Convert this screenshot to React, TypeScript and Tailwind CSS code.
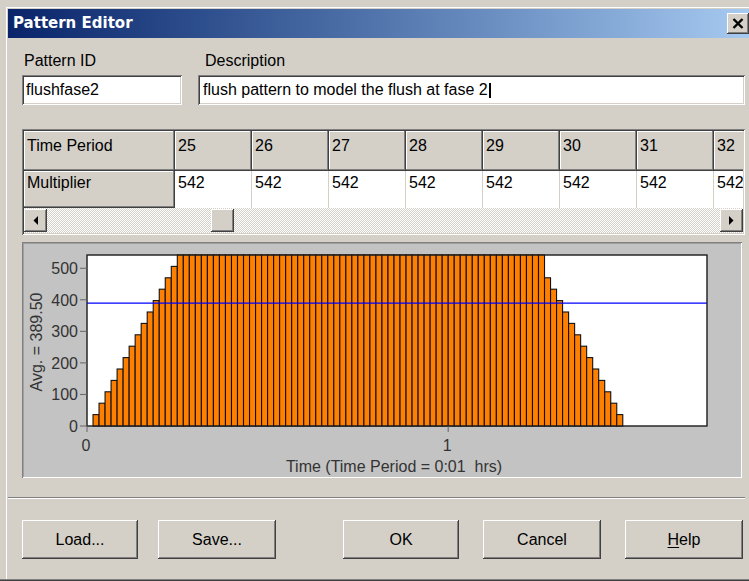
const raised =
  "shadow-[inset_-1px_-1px_#404040,inset_1px_1px_#ffffff,inset_-2px_-2px_#808080,inset_2px_2px_#d4d0c8]";
const sunken =
  "shadow-[inset_1px_1px_#808080,inset_-1px_-1px_#ffffff,inset_2px_2px_#404040,inset_-2px_-2px_#d4d0c8]";
const headerCell =
  "shadow-[inset_-1px_-1px_#404040,inset_-2px_-2px_#808080,inset_1px_1px_#ffffff]";

const periods = [25, 26, 27, 28, 29, 30, 31, 32];

// ramp up over 15 periods, hold at 542, ramp back down
const MAX = 542;
const values = Array.from({ length: 89 }, (_, i) =>
  i <= 15 ? (i * MAX) / 15 : i <= 75 ? MAX : ((89 - i) * MAX) / 15,
);
const AVG = 389.5;

const plot = { x: 63, y: 11, w: 620, h: 171 };
const barW = 6.02;
const yOf = (v: number) => plot.y + plot.h - (v * plot.h) / MAX;

function PatternChart() {
  return (
    <svg width={716} height={232} className="block">
      <rect x={plot.x} y={plot.y} width={plot.w} height={plot.h} fill="#ffffff" stroke="#333" strokeWidth={1} />
      {values.map((v, i) =>
        v > 0 ? (
          <rect
            key={i}
            x={plot.x + i * barW}
            y={yOf(v)}
            width={barW}
            height={plot.y + plot.h - yOf(v)}
            fill="#ff8000"
            stroke="#111"
            strokeWidth={1.1}
          />
        ) : null,
      )}
      <line x1={plot.x} x2={plot.x + plot.w} y1={yOf(AVG)} y2={yOf(AVG)} stroke="#0000ff" strokeWidth={1.4} />
      <rect x={plot.x} y={plot.y} width={plot.w} height={plot.h} fill="none" stroke="#222" strokeWidth={1} />

      <g fontFamily="'Liberation Sans', Arial, sans-serif" fontSize={16} fill="#333">
        {[0, 100, 200, 300, 400, 500].map((t) => (
          <g key={t}>
            <line x1={56} x2={plot.x} y1={yOf(t)} y2={yOf(t)} stroke="#666" />
            <text x={54} y={yOf(t) + 6} textAnchor="end">
              {t}
            </text>
          </g>
        ))}
        {[0, 1].map((h) => (
          <g key={h}>
            <line x1={plot.x + h * 60 * barW} x2={plot.x + h * 60 * barW} y1={182} y2={188} stroke="#666" />
            <text x={plot.x + h * 60 * barW - 1} y={207} textAnchor="middle">
              {h}
            </text>
          </g>
        ))}
        <text x={370} y={228} textAnchor="middle" style={{ whiteSpace: "pre" }}>
          {"Time (Time Period = 0:01  hrs)"}
        </text>
        <text transform="translate(18,98) rotate(-90)" textAnchor="middle">
          Avg. = 389.50
        </text>
      </g>
    </svg>
  );
}

function Arrow({ dir }: { dir: "left" | "right" }) {
  return (
    <div className={`flex h-[23px] w-[23px] shrink-0 items-center justify-center bg-[#d4d0c8] ${raised}`}>
      <svg width={5} height={9}>
        <polygon points={dir === "left" ? "5,0 5,9 0.5,4.5" : "0,0 0,9 4.5,4.5"} fill="#000" />
      </svg>
    </div>
  );
}

function Button({ label, width, className = "" }: { label: React.ReactNode; width: string; className?: string }) {
  return (
    <div
      className={`flex h-[39px] items-center justify-center bg-[#d4d0c8] text-[16px] text-black ${raised} ${width} ${className}`}
    >
      {label}
    </div>
  );
}

export default function App() {
  return (
    <div className="flex h-[581px] w-[749px] flex-col overflow-hidden bg-[#d4d0c8] font-['Liberation_Sans',Arial,sans-serif] text-black">
      <div className="ml-[6px] mt-[7px] flex flex-1 flex-col border-l border-t border-white pl-px pt-px">
        {/* title bar */}
        <div className="flex h-[29px] items-center justify-between bg-gradient-to-r from-[#0a246a] to-[#a6caf0] pl-[5px]">
          <span className="font-['DejaVu_Sans',sans-serif] text-[15px] font-bold text-white">Pattern Editor</span>
          <div className={`flex h-[21px] w-[22px] items-center justify-center bg-[#d4d0c8] ${raised}`}>
            <svg width={12} height={11}>
              <path d="M1.5 1 L10.5 10 M10.5 1 L1.5 10" stroke="#000" strokeWidth={2.4} />
            </svg>
          </div>
        </div>

        <div className="flex flex-col pl-[14px] pr-[4px]">
          {/* id + description */}
          <div className="mt-[13px] flex gap-[16px] text-[16px]">
            <div className="flex w-[160px] flex-col">
              <span className="h-[20px] pl-[2px] leading-[20px]">Pattern ID</span>
              <div className={`mt-[4px] flex h-[30px] items-center bg-white pl-[4px] ${sunken}`}>flushfase2</div>
            </div>
            <div className="flex w-[547px] flex-col">
              <span className="h-[20px] pl-[7px] leading-[20px]">Description</span>
              <div className={`mt-[4px] flex h-[30px] items-center bg-white pl-[5px] ${sunken}`}>
                flush pattern to model the flush at fase 2
                <span className="ml-px h-[15px] w-[2px] bg-black" />
              </div>
            </div>
          </div>

          {/* period grid */}
          <div className={`mt-[24px] flex h-[106px] w-[723px] flex-col bg-[#d4d0c8] p-[2px] ${sunken}`}>
            <div className="flex h-[40px] overflow-hidden text-[16px] leading-[18px]">
              <div className={`w-[151px] shrink-0 pl-[3px] pt-[6px] ${headerCell}`}>Time Period</div>
              {periods.map((p) => (
                <div key={p} className={`w-[77px] shrink-0 pl-[3px] pt-[6px] ${headerCell}`}>
                  {p}
                </div>
              ))}
            </div>
            <div className="flex h-[37px] overflow-hidden text-[16px] leading-[18px]">
              <div className={`w-[151px] shrink-0 pl-[3px] pt-[3px] ${headerCell}`}>Multiplier</div>
              {periods.map((p) => (
                <div key={p} className="w-[77px] shrink-0 border-r border-[#d4d0c8] bg-white pl-[3px] pt-[3px]">
                  542
                </div>
              ))}
            </div>
            <div className="flex h-[25px] items-center bg-[repeating-conic-gradient(#d4d0c8_0%_25%,#ffffff_0%_50%)] bg-[length:2px_2px]">
              <Arrow dir="left" />
              <div className="flex flex-1">
                <div className={`ml-[164px] h-[23px] w-[23px] bg-[#d4d0c8] ${raised}`} />
              </div>
              <Arrow dir="right" />
            </div>
          </div>

          {/* chart */}
          <div className="mt-[7px] h-[236px] w-[720px] bg-[#c3c3c3] p-[2px] shadow-[inset_1px_1px_#808080,inset_-1px_-1px_#ffffff,inset_2px_2px_#a0a0a0]">
            <PatternChart />
          </div>
        </div>

        <div className="mr-[4px] mt-[19px] h-[2px] border-t border-b border-t-[#808080] border-b-white" />

        <div className="mt-[21px] flex pl-[14px]">
          <Button label="Load..." width="w-[116px]" />
          <Button label="Save..." width="w-[118px]" className="ml-[20px]" />
          <Button label="OK" width="w-[116px]" className="ml-[67px]" />
          <Button label="Cancel" width="w-[118px]" className="ml-[24px]" />
          <Button
            label={
              <span>
                <span className="underline underline-offset-2">H</span>elp
              </span>
            }
            width="w-[118px]"
            className="ml-[24px]"
          />
        </div>
      </div>
      <div className="h-[2px] border-b border-t border-b-[#404040] border-t-[#808080]" />
    </div>
  );
}
